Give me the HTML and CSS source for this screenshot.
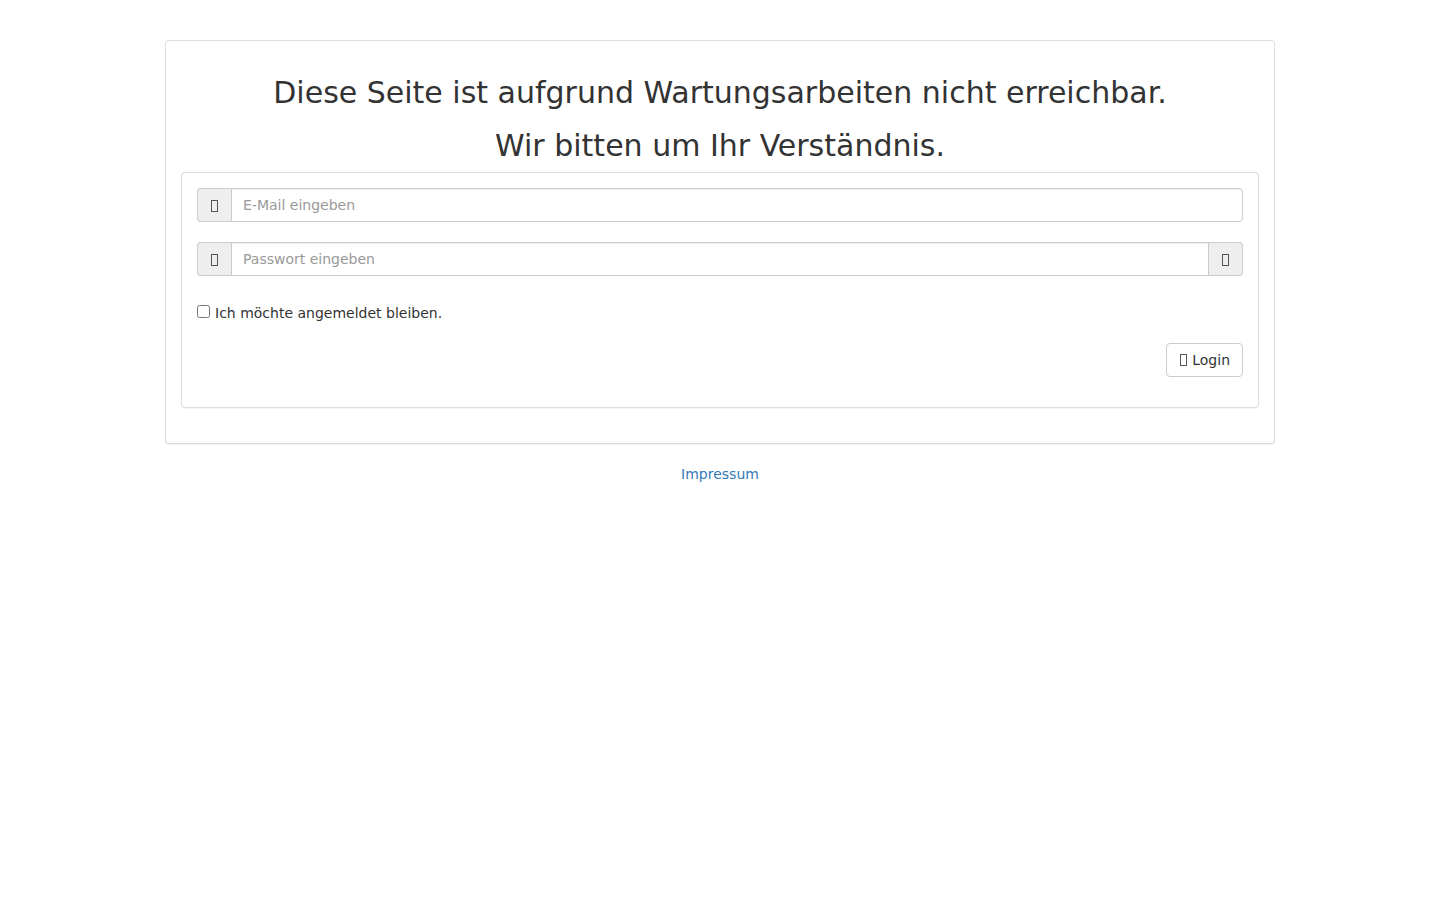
FILE: index.html
```html
<!DOCTYPE html>
<html lang="de">
<head>
<meta charset="utf-8">
<title>Wartung</title>
<link rel="stylesheet" href="styles.css">
</head>
<body>
<div class="container">
  <div class="panel outer">
    <div class="panel-body">
      <h2 class="title">Diese Seite ist aufgrund Wartungsarbeiten nicht erreichbar.</h2>
      <h2 class="title">Wir bitten um Ihr Verständnis.</h2>
      <div class="panel inner">
        <div class="panel-body">
          <div class="form-group">
            <div class="input-group">
              <span class="addon left"><span class="tofu"></span></span>
              <input class="control" type="text" placeholder="E-Mail eingeben">
            </div>
          </div>
          <div class="form-group">
            <div class="input-group">
              <span class="addon left"><span class="tofu"></span></span>
              <input class="control mid" type="password" placeholder="Passwort eingeben">
              <span class="addon right"><span class="tofu"></span></span>
            </div>
          </div>
          <div class="checkbox">
            <label><input type="checkbox" class="cb"> Ich möchte angemeldet bleiben.</label>
          </div>
          <div class="actions">
            <button class="btn" type="button"><span class="tofu"></span> Login</button>
          </div>
        </div>
      </div>
    </div>
  </div>
  <div class="footer"><a href="#">Impressum</a></div>
</div>
</body>
</html>
```
FILE: styles.css
```css
* { box-sizing: border-box; }
html, body { margin: 0; padding: 0; }
body {
  font-family: "DejaVu Sans", sans-serif;
  font-size: 14px;
  line-height: 20px;
  color: #333;
  background: #fff;
}
.container {
  width: 1110px;
  margin: 0 auto;
  padding-top: 40px;
}
.panel {
  background: #fff;
  border: 1px solid #ddd;
  border-radius: 4px;
  box-shadow: 0 1px 1px rgba(0,0,0,0.05);
  margin-bottom: 20px;
}
.panel-body { padding: 15px; }
.outer > .panel-body { padding-top: 35px; }
.title {
  font-size: 30px;
  font-weight: 500;
  line-height: 33px;
  text-align: center;
  margin: 0 0 20px;
}
.title + .title { margin-bottom: 10px; }
.form-group { margin-bottom: 20px; }
.input-group {
  display: flex;
  height: 34px;
}
.addon {
  width: 34px;
  flex: none;
  background: #eee;
  border: 1px solid #ccc;
  display: flex;
  align-items: center;
  justify-content: center;
  color: #555;
}
.addon.left { border-radius: 4px 0 0 4px; border-right: 0; }
.addon.right { border-radius: 0 4px 4px 0; border-left: 0; }
.tofu {
  display: inline-block;
  width: 7px;
  height: 12px;
  border: 1px solid #555;
  vertical-align: -1px;
  margin-top: 2px;
}
.control {
  flex: 1;
  min-width: 0;
  height: 34px;
  border: 1px solid #ccc;
  border-radius: 0 4px 4px 0;
  padding: 6px 11px;
  font-family: inherit;
  font-size: 14px;
  color: #555;
  box-shadow: inset 0 1px 1px rgba(0,0,0,0.075);
  outline: none;
}
.control.mid { border-radius: 0; }
.control::placeholder { color: #999; }
.checkbox { margin: 27px 0 20px; }
.checkbox label { display: flex; align-items: center; gap: 5px; }
.cb { margin: 0; width: 13px; height: 13px; position: relative; top: -2px; }
.actions {
  display: flex;
  justify-content: flex-end;
  margin-top: 10px;
  margin-bottom: 15px;
}
.btn {
  font-family: inherit;
  font-size: 14px;
  line-height: 20px;
  color: #333;
  background: #fff;
  border: 1px solid #ccc;
  border-radius: 4px;
  padding: 6px 12px 6px 13px;
  height: 34px;
}
.btn .tofu { margin-right: 1px; }
.footer { text-align: center; }
.footer a { color: #337ab7; text-decoration: none; }
```
